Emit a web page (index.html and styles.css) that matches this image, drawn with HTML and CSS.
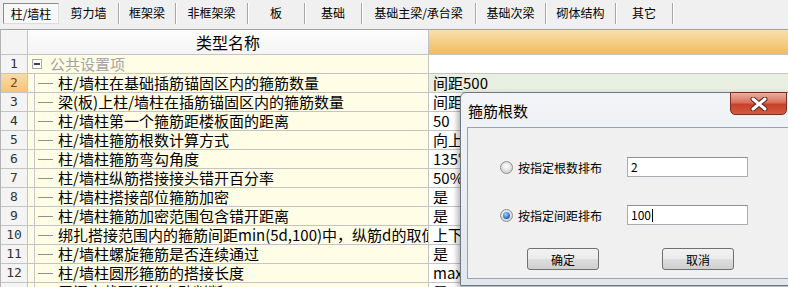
FILE: index.html
```html
<!DOCTYPE html>
<html lang="zh-CN">
<head>
    <meta charset="UTF-8">
    <meta name="viewport" content="width=device-width, initial-scale=1.0">
    <title>箍筋根数</title>
    <link rel="stylesheet" href="styles.css">
</head>
<body>
    <div class="tabs">
        <div class="tab first active">柱/墙柱</div>
        <div class="tab second">剪力墙</div>
        <div class="tab">框架梁</div>
        <div class="tab wide">非框架梁</div>
        <div class="tab">板</div>
        <div class="tab">基础</div>
        <div class="tab xl">基础主梁/承台梁</div>
        <div class="tab mid">基础次梁</div>
        <div class="tab mid">砌体结构</div>
        <div class="tab">其它</div>
    </div>

    <div class="grid">
        <div class="row head">
            <div class="num"></div>
            <div class="name">类型名称</div>
            <div class="val"></div>
        </div>
        <div class="row">
            <div class="num">1</div>
            <div class="name group"><span class="minus"></span>公共设置项</div>
            <div class="val"></div>
        </div>
        <div class="row selected">
            <div class="num">2</div>
            <div class="name"><span class="tree"></span>柱/墙柱在基础插筋锚固区内的箍筋数量</div>
            <div class="val">间距500</div>
        </div>
        <div class="row">
            <div class="num">3</div>
            <div class="name"><span class="tree"></span>梁(板)上柱/墙柱在插筋锚固区内的箍筋数量</div>
            <div class="val">间距500</div>
        </div>
        <div class="row">
            <div class="num">4</div>
            <div class="name"><span class="tree"></span>柱/墙柱第一个箍筋距楼板面的距离</div>
            <div class="val">50</div>
        </div>
        <div class="row">
            <div class="num">5</div>
            <div class="name"><span class="tree"></span>柱/墙柱箍筋根数计算方式</div>
            <div class="val">向上取整+1</div>
        </div>
        <div class="row">
            <div class="num">6</div>
            <div class="name"><span class="tree"></span>柱/墙柱箍筋弯勾角度</div>
            <div class="val">135°</div>
        </div>
        <div class="row">
            <div class="num">7</div>
            <div class="name"><span class="tree"></span>柱/墙柱纵筋搭接接头错开百分率</div>
            <div class="val">50%</div>
        </div>
        <div class="row">
            <div class="num">8</div>
            <div class="name"><span class="tree"></span>柱/墙柱搭接部位箍筋加密</div>
            <div class="val">是</div>
        </div>
        <div class="row">
            <div class="num">9</div>
            <div class="name"><span class="tree"></span>柱/墙柱箍筋加密范围包含错开距离</div>
            <div class="val">是</div>
        </div>
        <div class="row">
            <div class="num">10</div>
            <div class="name"><span class="tree"></span>绑扎搭接范围内的箍筋间距min(5d,100)中，纵筋d的取值</div>
            <div class="val">上下较小值</div>
        </div>
        <div class="row">
            <div class="num">11</div>
            <div class="name"><span class="tree"></span>柱/墙柱螺旋箍筋是否连续通过</div>
            <div class="val">是</div>
        </div>
        <div class="row">
            <div class="num">12</div>
            <div class="name"><span class="tree"></span>柱/墙柱圆形箍筋的搭接长度</div>
            <div class="val">max(lae,300)</div>
        </div>
        <div class="row">
            <div class="num">13</div>
            <div class="name"><span class="tree"></span>层间变截面钢筋自动判断</div>
            <div class="val">是</div>
        </div>
    </div>

    <div class="dialog">
        <div class="dialog-title">箍筋根数</div>
        <div class="close">
            <svg width="22" height="14" viewBox="0 0 22 14">
                <path d="M5 2 L17 12 M17 2 L5 12" stroke="#5a2a22" stroke-width="5" stroke-linecap="round"/>
                <path d="M5 2 L17 12 M17 2 L5 12" stroke="#ffffff" stroke-width="3" stroke-linecap="round"/>
            </svg>
        </div>
        <div class="panel">
            <div class="option">
                <label class="opt"><span class="radio"></span>按指定根数排布</label>
                <div class="field">2</div>
            </div>
            <div class="option">
                <label class="opt"><span class="radio checked"></span>按指定间距排布</label>
                <div class="field">100<span class="caret"></span></div>
            </div>
            <div class="buttons">
                <button class="btn">确定</button>
                <button class="btn">取消</button>
            </div>
        </div>
    </div>
</body>
</html>
```

FILE: styles.css
```css
* {
    box-sizing: border-box;
}

body {
    margin: 0;
    width: 788px;
    height: 287px;
    overflow: hidden;
    position: relative;
    background: #f0f0f0;
    font-family: "Noto Sans CJK SC", "Noto Sans", sans-serif;
    color: #000;
}

/* tab strip */
.tabs {
    display: flex;
    height: 29px;
    padding: 3px 0 0 3px;
    background: #f0f0f0;
}

.tab {
    width: 57px;
    height: 21px;
    font-size: 12px;
    line-height: 20px;
    text-align: center;
    border-right: 1px solid #a8a8a8;
    box-shadow: 1px 0 0 #ffffff;
}

.tab.first { width: 56px; }
.tab.second { width: 60px; }
.tab.wide { width: 72px; }
.tab.mid { width: 70px; }
.tab.xl { width: 114px; }

.tab.active {
    border: 1px solid;
    border-color: #8c8c8c #dcdcdc #dcdcdc #8c8c8c;
    background: #f8f8f8;
    box-shadow: none;
}

/* grid */
.grid {
    border-top: 1px solid #a0a0a0;
    border-left: 1px solid #b4b4b4;
    background: #ffffff;
}

.row {
    display: flex;
    height: 19px;
    border-bottom: 1px solid #c4c4c4;
    font-size: 15px;
    line-height: 18px;
}

.num {
    width: 27px;
    flex: none;
    border-right: 1px solid #c4c4c4;
    background: #f4f4f4;
    color: #333;
    text-align: center;
    font-family: "DejaVu Sans Mono", monospace;
    font-size: 13px;
}

.name {
    width: 401px;
    flex: none;
    border-right: 1px solid #c4c4c4;
    background: #fffde6;
    padding-left: 6px;
    display: flex;
    align-items: center;
    white-space: nowrap;
    overflow-x: clip;
}

.val {
    flex: 1;
    padding-left: 4px;
    white-space: nowrap;
    overflow-x: clip;
}

.row.head {
    height: 25px;
    line-height: 24px;
    font-size: 16px;
}

.head .name {
    justify-content: center;
    background: linear-gradient(#fdfdfd, #f4f4f4);
    padding-left: 0;
}

.head .val {
    background: linear-gradient(#f9dfae, #f0bd5c);
}

.selected .num {
    background: linear-gradient(#fbdba6, #f6c47a);
    color: #7a4a10;
}

.selected .val {
    background: #e9efe1;
}

.group {
    color: #a4a4a4;
}

.minus {
    position: relative;
    width: 10px;
    height: 10px;
    margin: 0 8px 0 -2px;
    border: 1px solid #a8a8a8;
    background: #ffffff;
}

.minus::after {
    content: "";
    position: absolute;
    left: 1px;
    top: 3px;
    width: 6px;
    height: 2px;
    background: #404040;
}

.tree {
    position: relative;
    width: 24px;
    height: 18px;
    flex: none;
    border-left: 1px solid #c8c8c8;
}

.tree::after {
    content: "";
    position: absolute;
    left: 3px;
    top: 9px;
    width: 15px;
    height: 1px;
    background: #909090;
}

/* dialog */
.dialog {
    position: absolute;
    left: 460px;
    top: 92px;
    width: 340px;
    height: 194px;
    background: linear-gradient(#f2f4f7, #e2e7ed);
    border: 1px solid #6e7883;
    border-radius: 6px 6px 0 0;
    box-shadow: -2px 3px 6px rgba(0, 0, 0, 0.35);
}

.dialog-title {
    height: 34px;
    padding-left: 7px;
    font-size: 15px;
    line-height: 36px;
}

.close {
    position: absolute;
    left: 269px;
    top: -1px;
    width: 57px;
    height: 23px;
    border: 1px solid #7a2f22;
    border-radius: 0 0 5px 5px;
    background: linear-gradient(#eab0a2, #d9705a 45%, #c7412a 55%, #d55a40);
    display: flex;
    justify-content: center;
    align-items: center;
}

.panel {
    margin-left: 6px;
    height: 152px;
    background: #f0f0f0;
    border: 1px solid #9aa3ad;
    padding: 29px 0 0 32px;
    font-size: 12px;
}

.option {
    display: flex;
    align-items: center;
    height: 20px;
    margin-bottom: 28px;
}

.option + .option {
    margin-bottom: 23px;
}

.opt {
    width: 127px;
    display: flex;
    align-items: center;
}

.radio {
    width: 13px;
    height: 13px;
    margin-right: 5px;
    border-radius: 50%;
    border: 1px solid #8e8f8f;
    background: radial-gradient(circle at 50% 40%, #ffffff, #d6d6d6 70%, #c4c4c4);
    position: relative;
}

.radio.checked::after {
    content: "";
    position: absolute;
    left: 2px;
    top: 2px;
    width: 7px;
    height: 7px;
    border-radius: 50%;
    background: radial-gradient(circle at 40% 35%, #a9d4ff, #2a6fc4 60%, #174a8c);
}

.field {
    width: 121px;
    height: 20px;
    border: 1px solid #abadb3;
    border-top-color: #8e9199;
    background: #ffffff;
    padding-left: 3px;
    line-height: 18px;
    font-size: 12px;
    display: flex;
    align-items: center;
}

.caret {
    width: 1px;
    height: 13px;
    margin-left: 1px;
    background: #000;
}

.buttons {
    display: flex;
    gap: 63px;
    padding-left: 27px;
}

.btn {
    width: 72px;
    height: 22px;
    padding: 0;
    border: 1px solid #707070;
    border-radius: 3px;
    background: linear-gradient(#f2f2f2, #ebebeb 50%, #dddddd 51%, #cfcfcf);
    font-family: "Noto Sans CJK SC", sans-serif;
    font-size: 12px;
    color: #000;
}
```
